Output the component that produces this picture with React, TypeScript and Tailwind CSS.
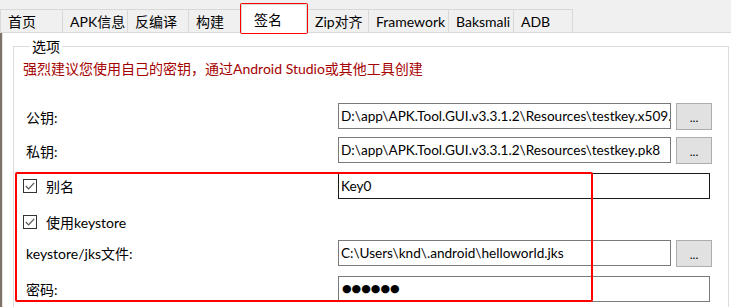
import * as React from 'react';

type Tab = { label: string; width: string };

const tabs: Tab[] = [
  { label: '首页', width: 'w-[62px]' },
  { label: 'APK信息', width: 'w-[65px]' },
  { label: '反编译', width: 'w-[61px]' },
  { label: '构建', width: 'w-[53px]' },
  { label: '签名', width: 'w-[66px]' },
  { label: 'Zip对齐', width: 'w-[61px]' },
  { label: 'Framework', width: 'w-[80px]' },
  { label: 'Baksmali', width: 'w-[65px]' },
  { label: 'ADB', width: 'w-[59px]' },
];

const SELECTED = '签名';

function CheckBox() {
  return (
    <span className="flex h-[14px] w-[14px] shrink-0 items-center justify-center border border-[#333333] bg-white">
      <svg width="12" height="12" viewBox="0 0 12 12">
        <path d="M1.8 6 L4.6 8.8 L10.2 2.8" fill="none" stroke="#555555" strokeWidth="1.2" />
      </svg>
    </span>
  );
}

function TextBox({
  value,
  wide,
  dark,
}: {
  value: React.ReactNode;
  wide?: boolean;
  dark?: boolean;
}) {
  return (
    <div
      className={`flex h-[26px] items-center overflow-hidden whitespace-nowrap border bg-white pl-[2px] text-[13.6px] ${
        wide ? 'w-[372px]' : 'w-[333px]'
      } ${dark ? 'border-[#1a1a1a]' : 'border-[#7a7a7a]'}`}
    >
      {value}
    </div>
  );
}

function BrowseButton() {
  return (
    <button className="ml-[5px] flex h-[27px] w-[36px] items-end justify-center border border-[#adadad] bg-[#e1e1e1] pb-[5px] text-[12px] leading-none">
      ...
    </button>
  );
}

export default function App() {
  return (
    <div className="relative h-[307px] w-[731px] overflow-hidden bg-[#f0f0f0] font-['Lato','Noto_Sans_CJK_SC',sans-serif] text-[14px] text-black">
      {/* tab strip */}
      <div className="flex h-[33px] items-end border-b border-[#d9d9d9]">
        {tabs.map((tab) =>
          tab.label === SELECTED ? (
            <div
              key={tab.label}
              className={`relative z-10 -mb-px flex h-[29px] items-center border-x border-t border-[#d9d9d9] bg-white pl-[12px] ${tab.width}`}
            >
              {tab.label}
            </div>
          ) : (
            <div
              key={tab.label}
              className={`flex h-[23px] items-center border-l border-t border-[#d9d9d9] pl-[7px] ${tab.width}`}
            >
              {tab.label}
            </div>
          )
        )}
        <div className="h-[23px] w-px border-l border-[#d9d9d9]" />
      </div>

      {/* page */}
      <div className="flex h-[274px]">
        <div className="w-[2px] shrink-0 bg-[#7d7268]" />
        <div className="flex-1 border-l border-[#e3e3e3] bg-white pl-[10px] pr-[2px] pt-[4px]">
          <fieldset className="m-0 h-[300px] min-w-0 border border-[#dcdcdc] pl-[9px] pr-[16px]">
            <legend className="ml-[7px] px-[2px] leading-[19px]">选项</legend>
            <p className="mt-[3px] leading-[19px] text-[#a50000]">
              强烈建议您使用自己的密钥，通过Android Studio或其他工具创建
            </p>

            <div className="mt-[25px] flex h-[27px] items-start">
              <span className="w-[315px] pl-[3px] pt-[5px] leading-[19px]">公钥:</span>
              <TextBox value="D:\app\APK.Tool.GUI.v3.3.1.2\Resources\testkey.x509.pem" />
              <BrowseButton />
            </div>

            <div className="mt-[7px] flex h-[27px] items-start">
              <span className="w-[315px] pl-[3px] pt-[5px] leading-[19px]">私钥:</span>
              <TextBox value="D:\app\APK.Tool.GUI.v3.3.1.2\Resources\testkey.pk8" />
              <BrowseButton />
            </div>

            <div className="mt-[9px] flex h-[26px] items-center">
              <label className="flex w-[315px] items-center">
                <CheckBox />
                <span className="ml-[9px]">别名</span>
              </label>
              <TextBox value="Key0" wide dark />
            </div>

            <div className="mt-[10px] flex h-[26px] items-center">
              <label className="flex items-center">
                <CheckBox />
                <span className="ml-[9px]">使用keystore</span>
              </label>
            </div>

            <div className="mt-[5px] flex h-[28px] items-start">
              <span className="w-[315px] pl-[3px] pt-[4px] leading-[19px]">keystore/jks文件:</span>
              <TextBox value="C:\Users\knd\.android\helloworld.jks" />
              <BrowseButton />
            </div>

            <div className="mt-[8px] flex h-[26px] items-center">
              <span className="w-[315px] pl-[3px] pt-[1px]">密码:</span>
              <TextBox
                wide
                value={
                  <span className="pl-[1px] font-['DejaVu_Sans',sans-serif] text-[11px]">●●●●●●</span>
                }
              />
            </div>
          </fieldset>
        </div>
      </div>

      {/* annotation boxes */}
      <div className="absolute left-[240px] top-[3px] h-[31px] w-[68px] rounded-[2px] border-2 border-[#ff0000]" />
      <div className="absolute left-[15px] top-[172px] h-[130px] w-[578px] rounded-[2px] border-2 border-[#ff0000]" />
    </div>
  );
}
